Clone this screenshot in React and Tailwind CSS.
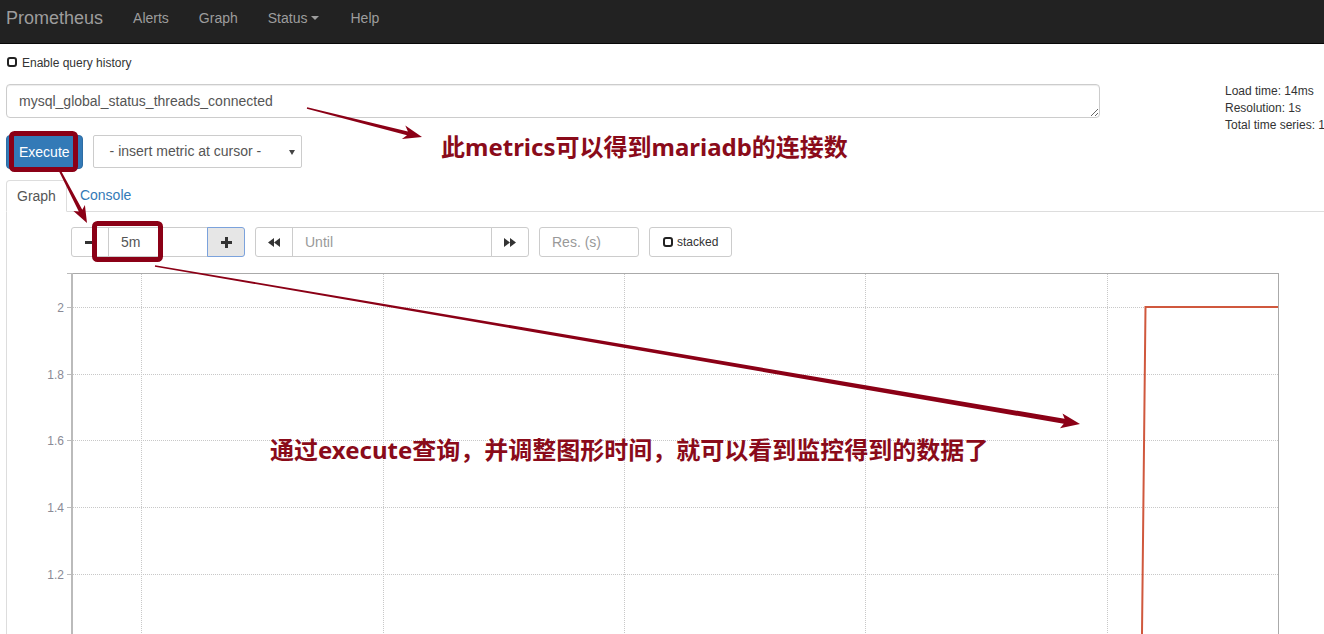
import React from 'react';

const RED = '#8b0016';

function arrow(x1, y1, x2, y2, w1, w2, hl, hw, back = 3) {
  const dx = x2 - x1, dy = y2 - y1;
  const L = Math.hypot(dx, dy);
  const ux = dx / L, uy = dy / L;
  const nx = -uy, ny = ux;
  const bx = x2 - ux * hl, by = y2 - uy * hl;
  const wx = bx - ux * back, wy = by - uy * back;
  const p = [
    [x1 + (nx * w1) / 2, y1 + (ny * w1) / 2],
    [bx + (nx * w2) / 2, by + (ny * w2) / 2],
    [wx + (nx * hw) / 2, wy + (ny * hw) / 2],
    [x2, y2],
    [wx - (nx * hw) / 2, wy - (ny * hw) / 2],
    [bx - (nx * w2) / 2, by - (ny * w2) / 2],
    [x1 - (nx * w1) / 2, y1 - (ny * w1) / 2],
  ];
  return p.map(([a, b]) => `${a.toFixed(1)},${b.toFixed(1)}`).join(' ');
}

function CheckIcon() {
  return <span className="inline-block w-[10px] h-[10px] border-2 border-[#222] rounded-[3px] bg-white" />;
}

function Nav() {
  return (
    <nav className="h-[44px] bg-[#222] border-b border-[#080808]">
      <div className="h-[36px] flex items-center text-[#9d9d9d] text-[14px]">
        <span className="ml-[6px] text-[18px] leading-none">Prometheus</span>
        <span className="ml-[30px]">Alerts</span>
        <span className="ml-[30px]">Graph</span>
        <span className="ml-[30px] flex items-center">
          Status
          <span className="ml-[4px] w-0 h-0 border-l-[4px] border-r-[4px] border-t-[4px] border-l-transparent border-r-transparent border-t-[#9d9d9d]" />
        </span>
        <span className="ml-[31px]">Help</span>
      </div>
    </nav>
  );
}

function Chart() {
  const vx = [141, 383, 624, 865, 1107];
  const ys = [
    [307, '2'],
    [374, '1.8'],
    [440, '1.6'],
    [507, '1.4'],
    [574, '1.2'],
  ];
  return (
    <svg width="1317" height="361" viewBox="7 273 1317 361" className="block">
      {vx.map((x) => (
        <line key={x} x1={x + 0.5} y1={274} x2={x + 0.5} y2={634} stroke="#c8c8c8" strokeDasharray="1 1" />
      ))}
      {ys.map(([y]) => (
        <line key={y} x1={73} y1={y + 0.5} x2={1278} y2={y + 0.5} stroke="#c8c8c8" strokeDasharray="1 1" />
      ))}
      <line x1="72" y1="273.5" x2="1278" y2="273.5" stroke="#aaa" />
      <line x1="1278.5" y1="273" x2="1278.5" y2="634" stroke="#aaa" />
      <line x1="72" y1="272" x2="72" y2="634" stroke="#bbb" strokeWidth="2" />
      <line x1="67" y1="273.5" x2="72" y2="273.5" stroke="#bbb" />
      {ys.map(([y, t]) => (
        <g key={t}>
          <line x1="67" y1={y + 0.5} x2="71" y2={y + 0.5} stroke="#bbb" />
          <text x="64" y={y + 4.5} textAnchor="end" fontSize="12" fill="#8a8a96" fontFamily="'Liberation Sans', Arial, sans-serif">
            {t}
          </text>
        </g>
      ))}
      <polyline points="1142,634 1145.5,307 1278,307" fill="none" stroke="#d0583d" strokeWidth="2" />
    </svg>
  );
}

function Controls() {
  const cell = 'h-[30px] border border-[#ccc] bg-white flex items-center';
  return (
    <div className="ml-[64px] flex items-center text-[14px]">
      <div className={`${cell} w-[38px] justify-center rounded-l-[3px]`}>
        <svg width="11" height="3"><rect width="11" height="3" fill="#333" /></svg>
      </div>
      <div className={`${cell} -ml-px w-[100px] pl-[12px] text-[#555]`}>5m</div>
      <div className="h-[30px] -ml-px w-[38px] border border-[#7ba2dc] bg-[#e6e6e6] rounded-r-[3px] flex items-center justify-center relative">
        <svg width="11" height="11">
          <rect x="4" y="0" width="3" height="11" fill="#333" />
          <rect x="0" y="4" width="11" height="3" fill="#333" />
        </svg>
      </div>
      <div className={`${cell} ml-[10px] w-[38px] justify-center rounded-l-[3px]`}>
        <svg width="12" height="9">
          <polygon points="6,0 6,9 0,4.5" fill="#333" />
          <polygon points="12,0 12,9 6,4.5" fill="#333" />
        </svg>
      </div>
      <div className={`${cell} -ml-px w-[200px] pl-[12px] text-[#999]`}>Until</div>
      <div className={`${cell} -ml-px w-[38px] justify-center rounded-r-[3px]`}>
        <svg width="12" height="9">
          <polygon points="0,0 0,9 6,4.5" fill="#333" />
          <polygon points="6,0 6,9 12,4.5" fill="#333" />
        </svg>
      </div>
      <div className={`${cell} ml-[10px] w-[100px] pl-[12px] text-[#999] rounded-[3px]`}>Res. (s)</div>
      <div className={`${cell} ml-[10px] w-[83px] pl-[13px] rounded-[3px] text-[12px] text-[#333]`}>
        <CheckIcon />
        <span className="ml-[4px]">stacked</span>
      </div>
    </div>
  );
}

export default function App() {
  return (
    <div className="relative w-[1324px] h-[634px] overflow-hidden bg-white text-[#333] font-['Liberation_Sans',Arial,sans-serif]">
      <Nav />
      <div className="pl-[6px]">
        <div className="mt-[10px] h-[17px] flex items-center text-[12px]">
          <span className="ml-px"><CheckIcon /></span>
          <span className="ml-[5px]">Enable query history</span>
        </div>
        <div className="mt-[13px] h-[34px] flex items-start">
          <textarea
            readOnly
            defaultValue="mysql_global_status_threads_connected"
            className="block shrink-0 w-[1094px] h-[34px] border border-[#ccc] rounded-[4px] px-[12px] py-[6px] text-[14px] leading-[20px] text-[#555] shadow-[inset_0_1px_1px_rgba(0,0,0,0.075)] outline-none overflow-hidden font-['Liberation_Sans',Arial,sans-serif]"
          />
          <div className="shrink-0 ml-[125px] -mt-[1px] text-[12px] leading-[17px] whitespace-nowrap">
            <div>Load time: 14ms</div>
            <div>Resolution: 1s</div>
            <div>Total time series: 1</div>
          </div>
        </div>
        <div className="mt-[17px] flex items-start">
          <div className="h-[34px] px-[12px] bg-[#337ab7] border border-[#2e6da4] rounded-[4px] text-white text-[14px] flex items-center">
            Execute
          </div>
          <div className="ml-[10px] h-[33px] w-[209px] border border-[#ccc] rounded-[2px] flex items-center pl-[16px] text-[14px] text-[#555] relative">
            - insert metric at cursor -
            <svg className="absolute right-[6px] top-[14px]" width="6" height="5">
              <polygon points="0,0 6,0 3,5" fill="#444" />
            </svg>
          </div>
        </div>
        <div className="mt-[11px] h-[32px] flex items-end border-b border-[#ddd] text-[14px]">
          <div className="-mb-px h-[32px] px-[10px] border border-[#ddd] border-b-white bg-white rounded-t-[4px] flex items-center text-[#555]">
            Graph
          </div>
          <div className="ml-[2px] h-[31px] px-[11px] flex items-center text-[#337ab7]">Console</div>
        </div>
        <div className="border-l border-[#ddd] pt-[15px] h-[430px]">
          <Controls />
          <div className="mt-[16px]">
            <Chart />
          </div>
        </div>
      </div>

      <svg className="absolute inset-0 pointer-events-none" width="1324" height="634">
        <rect x="11.5" y="133.5" width="64" height="36" rx="3" fill="none" stroke={RED} strokeWidth="5" />
        <rect x="94.5" y="223.5" width="66" height="36" rx="3" fill="none" stroke={RED} strokeWidth="5" />
        <polygon points={arrow(307, 108, 422, 137, 1.5, 4, 15, 14, 4)} fill={RED} />
        <polygon points={arrow(60, 171, 87, 223, 2, 4, 14, 13, 3)} fill={RED} />
        <polygon points={arrow(155, 266, 1080, 424, 1.5, 5, 16, 15, 3)} fill={RED} />
      </svg>

      <div className="absolute left-[441px] top-[133px] text-[24px] leading-[28px] font-bold text-[#8a0b1a] whitespace-nowrap font-['Noto_Sans','Noto_Sans_CJK_SC',sans-serif]">
        此metrics可以得到mariadb的连接数
      </div>
      <div className="absolute left-[270px] top-[436px] text-[24px] leading-[28px] font-bold text-[#8a0b1a] whitespace-nowrap font-['Noto_Sans','Noto_Sans_CJK_SC',sans-serif]">
        通过execute查询，并调整图形时间，就可以看到监控得到的数据了
      </div>
    </div>
  );
}
